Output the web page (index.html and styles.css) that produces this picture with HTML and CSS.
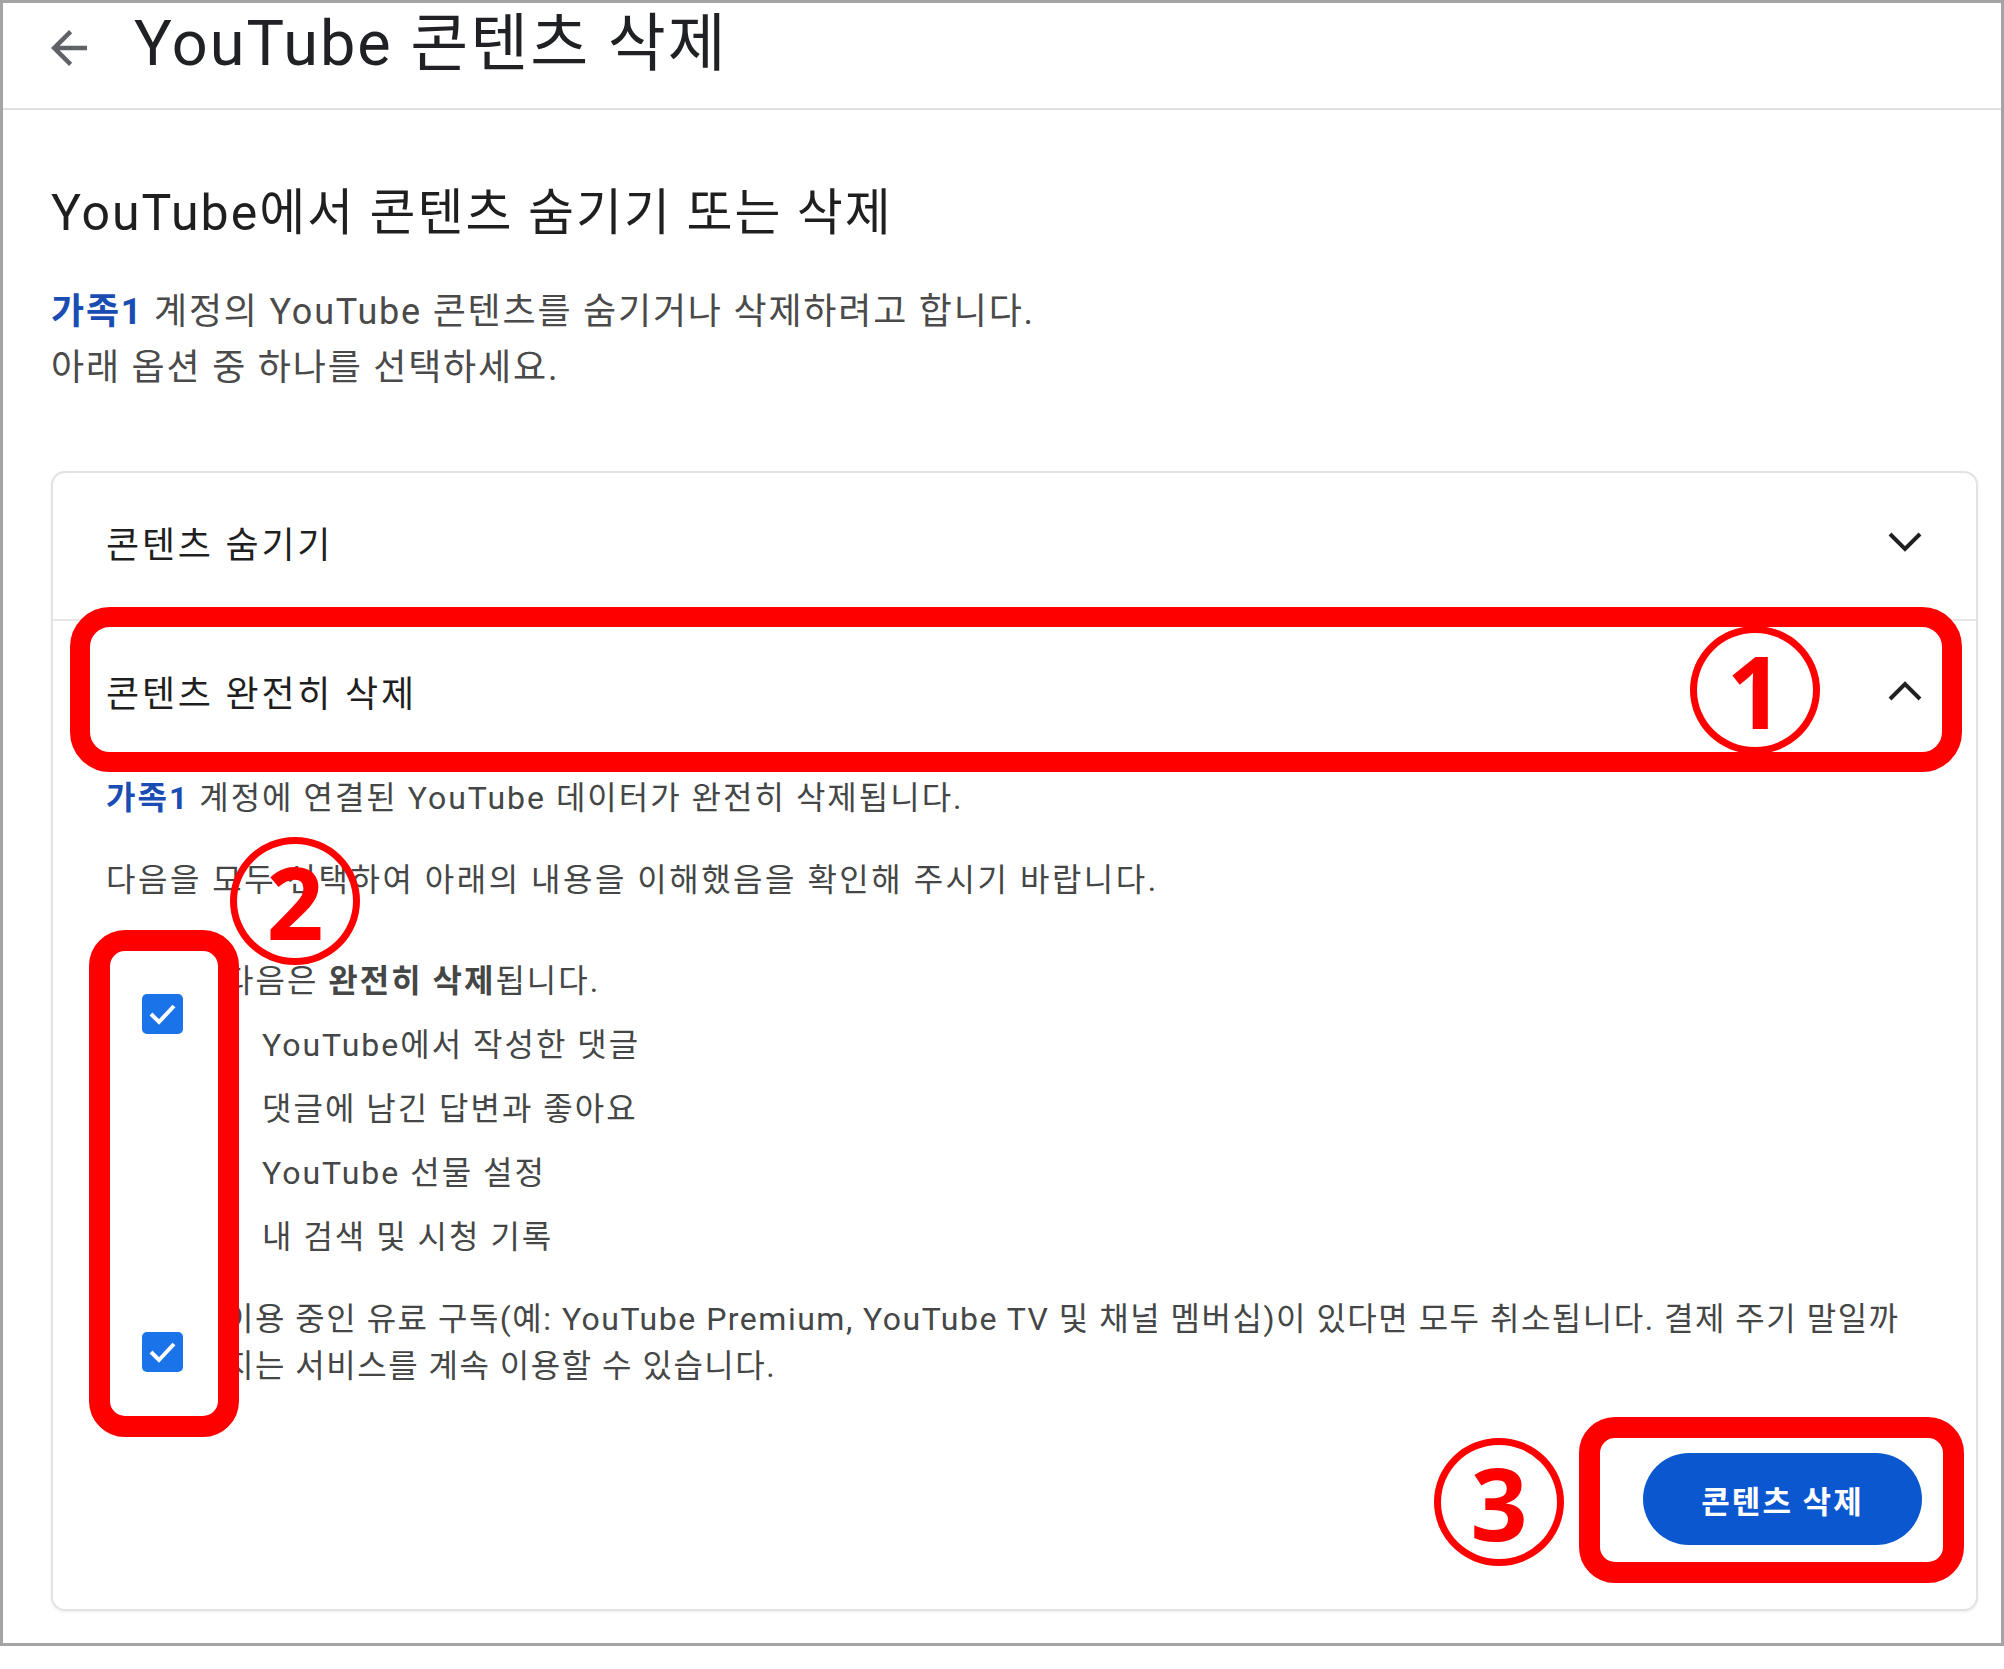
FILE: index.html
```html
<!DOCTYPE html>
<html lang="ko">
<head>
    <meta charset="UTF-8">
    <title>YouTube 콘텐츠 삭제</title>
    <link rel="stylesheet" href="styles.css">
</head>
<body>
    <div class="page">
        <header class="top-bar">
            <svg class="back-icon" width="54" height="54" viewBox="0 0 24 24"><path d="M20 11H7.83l5.59-5.59L12 4l-8 8 8 8 1.41-1.41L7.83 13H20v-2z"/></svg>
            <h1 class="page-title">YouTube 콘텐츠 삭제</h1>
        </header>

        <main class="content">
            <h2 class="section-title">YouTube에서 콘텐츠 숨기기 또는 삭제</h2>
            <p class="intro"><b class="account">가족1</b> 계정의 YouTube 콘텐츠를 숨기거나 삭제하려고 합니다.<br>아래 옵션 중 하나를 선택하세요.</p>

            <div class="card">
                <div class="row row-closed">
                    <span class="row-title">콘텐츠 숨기기</span>
                    <svg class="chevron" width="36" height="24" viewBox="0 0 36 24"><path d="M3 4 L18 19 L33 4"/></svg>
                </div>
                <div class="row row-open">
                    <span class="row-title">콘텐츠 완전히 삭제</span>
                    <svg class="chevron" width="36" height="24" viewBox="0 0 36 24"><path d="M3 20 L18 5 L33 20"/></svg>
                </div>
                <div class="row-body">
                    <p class="desc"><b class="account">가족1</b> 계정에 연결된 YouTube 데이터가 완전히 삭제됩니다.</p>
                    <p class="desc desc-gap">다음을 모두 선택하여 아래의 내용을 이해했음을 확인해 주시기 바랍니다.</p>

                    <div class="check-item check-first">
                        <span class="checkbox"><svg width="41" height="40" viewBox="0 0 41 40"><path d="M9 20 L17 28 L32 12"/></svg></span>
                        <div class="check-text">
                            <p class="check-line">다음은 <b>완전히 삭제</b>됩니다.</p>
                            <ul class="delete-list">
                                <li>YouTube에서 작성한 댓글</li>
                                <li>댓글에 남긴 답변과 좋아요</li>
                                <li>YouTube 선물 설정</li>
                                <li>내 검색 및 시청 기록</li>
                            </ul>
                        </div>
                    </div>

                    <div class="check-item check-second">
                        <span class="checkbox"><svg width="41" height="40" viewBox="0 0 41 40"><path d="M9 20 L17 28 L32 12"/></svg></span>
                        <p class="check-para">이용 중인 유료 구독(예: YouTube Premium, YouTube TV 및 채널 멤버십)이 있다면 모두 취소됩니다. 결제 주기 말일까<br>지는 서비스를 계속 이용할 수 있습니다.</p>
                    </div>

                    <div class="actions">
                        <button class="delete-btn">콘텐츠 삭제</button>
                    </div>
                </div>
            </div>
        </main>

        <!-- annotation marks -->
        <div class="mark-box box-one"></div>
        <div class="mark-box box-two"></div>
        <div class="mark-box box-three"></div>
        <div class="mark-num num-one">1</div>
        <div class="mark-num num-two">2</div>
        <div class="mark-num num-three">3</div>
    </div>
</body>
</html>
```

FILE: styles.css
```css
* {
    margin: 0;
    padding: 0;
    box-sizing: border-box;
}

body {
    background: #fff;
    font-family: Roboto, "Noto Sans CJK KR", sans-serif;
    color: #1f1f1f;
}

.page {
    position: relative;
    width: 2004px;
    height: 1646px;
    border: 3px solid #a4a4a4;
}

.top-bar {
    height: 107px;
    border-bottom: 2px solid #e0e0e0;
    display: flex;
    align-items: flex-start;
    padding: 9px 0 0 39px;
}

.back-icon {
    fill: #5f6368;
    margin-top: 9px;
}

.page-title {
    margin-left: 38px;
    font-size: 63px;
    font-weight: 400;
    line-height: 64px;
    letter-spacing: 2px;
    color: #202124;
}

.content {
    padding: 0 23px 0 48px;
}

.section-title {
    margin-top: 73px;
    font-size: 50px;
    font-weight: 400;
    line-height: 60px;
    letter-spacing: 2px;
    color: #1f1f1f;
}

.intro {
    margin-top: 41px;
    font-size: 36px;
    line-height: 56px;
    letter-spacing: 1.8px;
    color: #4a4a4a;
}

.account {
    color: #1a4db3;
    font-weight: 700;
}

.card {
    margin-top: 75px;
    border: 2px solid #e3e3e3;
    border-radius: 14px;
    box-shadow: 0 1px 3px rgba(0, 0, 0, 0.08);
}

.row {
    height: 148px;
    display: flex;
    align-items: center;
    justify-content: space-between;
    padding: 0 53px;
    border-bottom: 2px solid #e6e6e6;
}

.row-closed {
    padding-bottom: 8px;
}

.row-open {
    height: 140px;
    border-bottom: none;
}

.row-title {
    font-size: 36px;
    letter-spacing: 2.8px;
    color: #1f1f1f;
}

.chevron path {
    fill: none;
    stroke: #202124;
    stroke-width: 4;
}

.row-body {
    padding: 15px 54px 64px 53px;
    font-size: 32px;
    letter-spacing: 2px;
    color: #444746;
}

.desc {
    line-height: 44px;
}

.desc-gap {
    margin-top: 38px;
    letter-spacing: 2.5px;
}

.check-item {
    display: flex;
    padding-left: 36px;
}

.check-first {
    margin-top: 47px;
}

.check-second {
    margin-top: 27px;
}

.checkbox {
    flex: none;
    width: 41px;
    height: 40px;
    border-radius: 5px;
    background: #1a73e8;
    margin-right: 41px;
}

.check-first .checkbox {
    margin-top: 45px;
}

.check-second .checkbox {
    margin-top: 36px;
}

.checkbox path {
    fill: none;
    stroke: #fff;
    stroke-width: 4;
}

.check-line {
    line-height: 64px;
}

.delete-list {
    list-style: none;
    padding-left: 38px;
}

.delete-list li {
    line-height: 64px;
}

.check-para {
    line-height: 47px;
    letter-spacing: 1.5px;
    white-space: nowrap;
}

.actions {
    display: flex;
    justify-content: flex-end;
    margin-top: 63px;
}

.delete-btn {
    width: 279px;
    height: 92px;
    border: none;
    border-radius: 46px;
    background: #0b57d0;
    color: #fff;
    font-family: Roboto, "Noto Sans CJK KR", sans-serif;
    font-size: 31px;
    font-weight: 700;
    letter-spacing: 2px;
}

.mark-box {
    position: absolute;
    border: 20px solid #ff0000;
    border-radius: 40px;
}

.box-one {
    left: 67px;
    top: 604px;
    width: 1892px;
    height: 165px;
}

.box-two {
    left: 86px;
    top: 927px;
    width: 150px;
    height: 507px;
    border-width: 21px;
    border-radius: 36px;
}

.box-three {
    left: 1576px;
    top: 1414px;
    width: 385px;
    height: 166px;
    border-width: 21px;
    border-radius: 36px;
}

.mark-num {
    position: absolute;
    width: 130px;
    height: 128px;
    border: 7px solid #ff0000;
    border-radius: 50%;
    display: flex;
    align-items: center;
    justify-content: center;
    color: #ff0000;
    font-family: "Noto Sans", sans-serif;
    font-size: 100px;
    font-weight: 700;
    line-height: 1;
}

.num-one {
    left: 1687px;
    top: 623px;
}

.num-two {
    left: 227px;
    top: 834px;
}

.num-three {
    left: 1431px;
    top: 1435px;
}
```
